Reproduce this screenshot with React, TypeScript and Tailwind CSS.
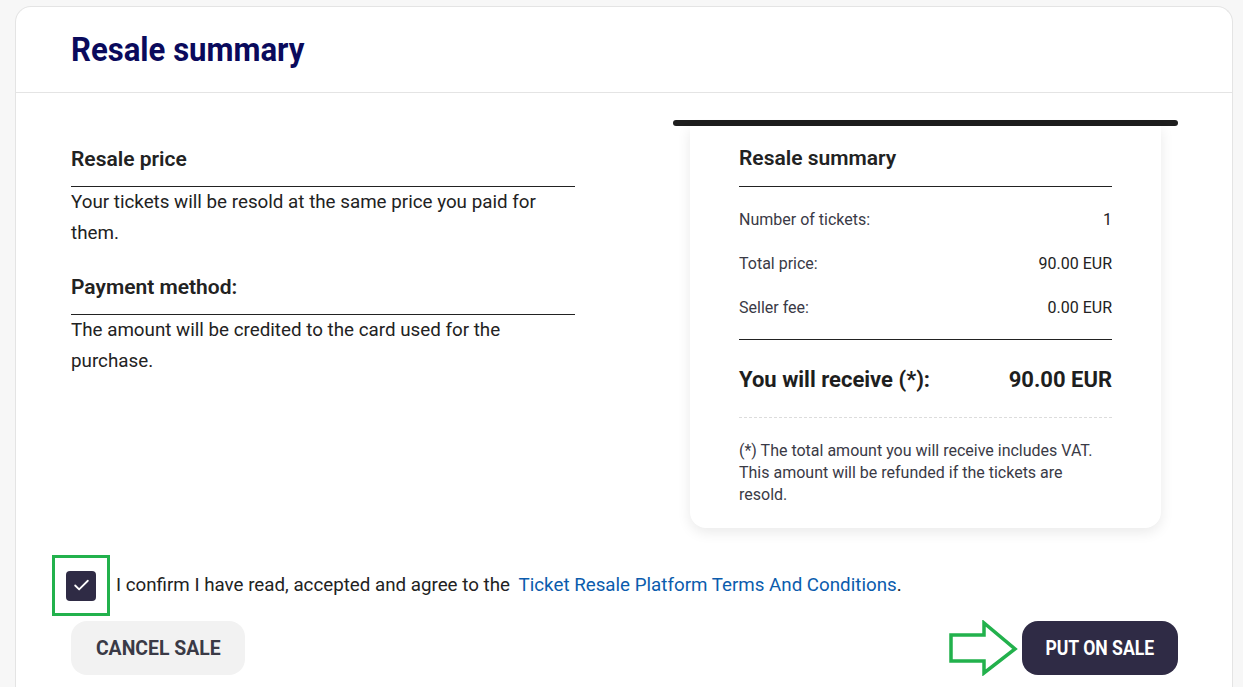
import { Check } from 'lucide-react'

const rows = [
  { label: 'Number of tickets:', value: '1' },
  { label: 'Total price:', value: '90.00 EUR' },
  { label: 'Seller fee:', value: '0.00 EUR' },
]

function InfoBlock({ title, text }: { title: string; text: string }) {
  return (
    <div>
      <h3 className="border-b border-[#222] pb-[13px] text-[21px] font-semibold leading-[28px] text-[#222]">{title}</h3>
      <p className="text-[18.8px] leading-[31px] text-[#222]">{text}</p>
    </div>
  )
}

/** Hollow arrow pointing at the primary action. */
function PointerArrow() {
  return (
    <svg width="72" height="56" viewBox="0 0 72 56" className="mr-[2px]">
      <path
        d="M3 15 H36 V3 L67 29 L36 53 V41 H3 Z"
        fill="none"
        stroke="#22b14c"
        strokeWidth="3.5"
        strokeLinejoin="miter"
      />
    </svg>
  )
}

export default function App() {
  return (
    <div className="min-h-[687px] bg-[#f7f7f7] pl-[15px] pr-[10px] pt-[6px] font-['Roboto',sans-serif]">
      <div className="rounded-t-[16px] border border-b-0 border-[#e4e4e4] bg-white">
        <div className="border-b border-[#e4e4e4] pb-[21px] pl-[55px] pt-[20px]">
          <h1 className="inline-block origin-left scale-x-[0.915] text-[34px] font-bold leading-[44px] text-[#0a0a5c]">
            Resale summary
          </h1>
        </div>

        <div className="flex pl-[55px] pr-[54px] pt-[27px]">
          <div className="flex w-[504px] flex-col gap-[24px] pt-[25px]">
            <InfoBlock title="Resale price" text="Your tickets will be resold at the same price you paid for them." />
            <InfoBlock title="Payment method:" text="The amount will be credited to the card used for the purchase." />
          </div>

          <div className="ml-auto w-[505px]">
            <div className="h-[6px] rounded-full bg-[#1e1e1e]" />
            <div className="mx-[17px] rounded-b-[16px] bg-white px-[49px] pb-[22px] pt-[18px] shadow-[0_4px_14px_rgba(0,0,0,0.09)]">
              <h3 className="border-b border-[#222] pb-[14px] text-[21px] font-semibold leading-[28px] text-[#222]">
                Resale summary
              </h3>
              <div className="border-b border-[#222] pb-[9px] pt-[11px]">
                {rows.map(r => (
                  <div key={r.label} className="flex h-[44px] items-center justify-between text-[16px] text-[#3a3a46]">
                    <span>{r.label}</span>
                    <span className="text-[#222]">{r.value}</span>
                  </div>
                ))}
              </div>
              <div className="flex items-center justify-between border-b border-dashed border-[#dcdcdc] pb-[21px] pt-[24px] text-[22px] font-bold leading-[32px] text-[#1e1e1e]">
                <span>You will receive (*):</span>
                <span>90.00 EUR</span>
              </div>
              <p className="pt-[22px] text-[16px] leading-[22px] text-[#3a3a46]">
                (*) The total amount you will receive includes VAT.
                <br />
                This amount will be refunded if the tickets are resold.
              </p>
            </div>
          </div>
        </div>

        <div className="mt-[27px] flex items-center pl-[36px]">
          <div className="flex h-[61px] w-[58px] items-center justify-center border-[3.5px] border-[#22b14c]">
            <span className="flex h-[30px] w-[30px] items-center justify-center rounded-[4px] bg-[#2f2b45]">
              <Check size={19} strokeWidth={2.25} className="text-white" />
            </span>
          </div>
          <span className="ml-[6px] text-[18.75px] text-[#222]">
            I confirm I have read, accepted and agree to the{' '}
            <a className="ml-[4px] text-[#0b5cad]">Ticket Resale Platform Terms And Conditions</a>.
          </span>
        </div>

        <div className="flex items-center justify-between pb-[12px] pl-[55px] pr-[54px] pt-[4px]">
          <button className="h-[54px] w-[174px] rounded-[16px] bg-[#f2f2f2] text-[20px] font-bold text-[#3a3a46]">
            <span className="inline-block scale-x-[0.97]">CANCEL SALE</span>
          </button>
          <div className="flex items-center">
            <PointerArrow />
            <button className="h-[54px] w-[156px] rounded-[16px] bg-[#2f2b45] text-[20px] font-bold text-white">
              <span className="inline-block scale-x-[0.88]">PUT ON SALE</span>
            </button>
          </div>
        </div>
      </div>
    </div>
  )
}
